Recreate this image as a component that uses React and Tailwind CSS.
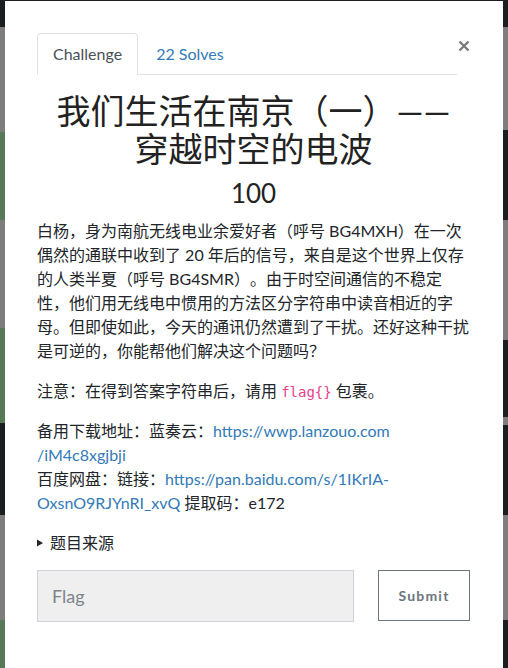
import React from "react";

// dimmed page behind the modal, seen at the left and right edges
const LEFT = [
  "h-[27px] bg-[#1c1f22]",
  "h-[105px] bg-[#7d7d7d]",
  "h-[88px] bg-[#587957]",
  "h-[108px] bg-[#7d7d7d]",
  "h-[95px] bg-[#587957]",
  "h-[92px] bg-[#1c1f22]",
  "h-[105px] bg-[#7d7d7d]",
  "h-[48px] bg-[#587957]",
];

const RIGHT = [
  "h-[27px] bg-[#1c1f22]",
  "h-[103px] bg-[#7d7d7d]",
  "h-[90px] bg-[#1c1f22]",
  "h-[120px] bg-[#7d7d7d]",
  "h-[77px] bg-[#1c1f22]",
  "h-[8px] bg-[#7d7d7d]",
  "h-[90px] bg-[#1c1f22]",
  "h-[105px] bg-[#7d7d7d]",
  "h-[48px] bg-[#1c1f22]",
];

const Strip = ({ parts }) => (
  <div className="w-[5px] flex flex-col shrink-0">
    {parts.map((c, i) => (
      <div key={i} className={c} />
    ))}
  </div>
);

const Link = ({ children }) => <a className="text-[#337ab7]">{children}</a>;

export default function App() {
  return (
    <div className="w-[508px] h-[668px] overflow-hidden flex bg-[#1c1f22] font-[Lato,'Noto_Sans_CJK_SC',sans-serif] text-[#212529] [text-spacing-trim:space-all]">
      <Strip parts={LEFT} />

      <div className="flex-1 mt-px bg-white pt-[32px] pl-[32px] pr-[33px]">
        {/* Tabs + close */}
        <div className="flex items-start">
          <div className="flex-1 flex border-b border-[#dee2e6] text-[16px] leading-[20px]">
            <div className="-mb-px px-[15px] py-[10px] bg-white border border-[#dee2e6] border-b-white rounded-t text-[#495057]">
              Challenge
            </div>
            <div className="-mb-px ml-[2px] px-[15px] py-[10px] border border-transparent text-[#337ab7]">
              22 Solves
            </div>
          </div>
          <button className="w-[13px] mt-[7px] flex justify-end">
            <svg width="12" height="12" viewBox="0 0 12 12">
              <path d="M1.5 1.5 L10.5 10.5 M10.5 1.5 L1.5 10.5" stroke="#7c7c7c" strokeWidth="2.4" />
            </svg>
          </button>
        </div>

        <h3 className="mt-[17px] text-center text-[34px] leading-[38px] text-[#222]">
          我们生活在南京（一）——
          <br />
          穿越时空的电波
        </h3>
        <h4 className="mt-[11px] text-center text-[26px] leading-[29px] text-[#222]">100</h4>

        <div className="mt-[11px] text-[16px] leading-[24px]">
          <p className="mb-[16px]">
            白杨，身为南航无线电业余爱好者（呼号 BG4MXH）在一次偶然的通联中收到了 20 年后的信号，来自是这个世界上仅存的人类半夏（呼号 BG4SMR）。由于时空间通信的不稳定性，他们用无线电中惯用的方法区分字符串中读音相近的字母。但即使如此，今天的通讯仍然遭到了干扰。还好这种干扰是可逆的，你能帮他们解决这个问题吗？
          </p>
          <p className="mb-[16px]">
            注意：在得到答案字符串后，请用{" "}
            <code className="font-['DejaVu_Sans_Mono',monospace] text-[14px] leading-none text-[#e83e8c]">flag{"{}"}</code> 包裹。
          </p>
          <p className="mb-[16px]">
            备用下载地址：蓝奏云：
            <Link>
              https://wwp.lanzouo.com
              <br />
              /iM4c8xgjbji
            </Link>
            <br />
            百度网盘：链接：
            <Link>
              https://pan.baidu.com/s/1IKrIA-
              <br />
              OxsnO9RJYnRI_xvQ
            </Link>{" "}
            提取码：e172
          </p>
          <details>
            <summary className="list-none flex items-center gap-[7px]">
              <svg width="6" height="8" viewBox="0 0 6 8">
                <path d="M0 0.5 L6 4 L0 7.5 Z" fill="#212529" />
              </svg>
              题目来源
            </summary>
          </details>
        </div>

        {/* Flag form */}
        <div className="mt-[15px] flex items-start gap-[24px]">
          <input
            placeholder="Flag"
            className="flex-1 min-w-0 h-[52px] px-[14px] bg-[#efefef] border border-[#cfd4da] text-[18px] outline-none placeholder:text-[#7d838a]"
          />
          <button className="w-[92px] h-[51px] border-[1.5px] border-[#6c757d] text-[#6c757d] text-[14px] font-bold tracking-[1.2px]">
            Submit
          </button>
        </div>
      </div>

      <Strip parts={RIGHT} />
    </div>
  );
}
